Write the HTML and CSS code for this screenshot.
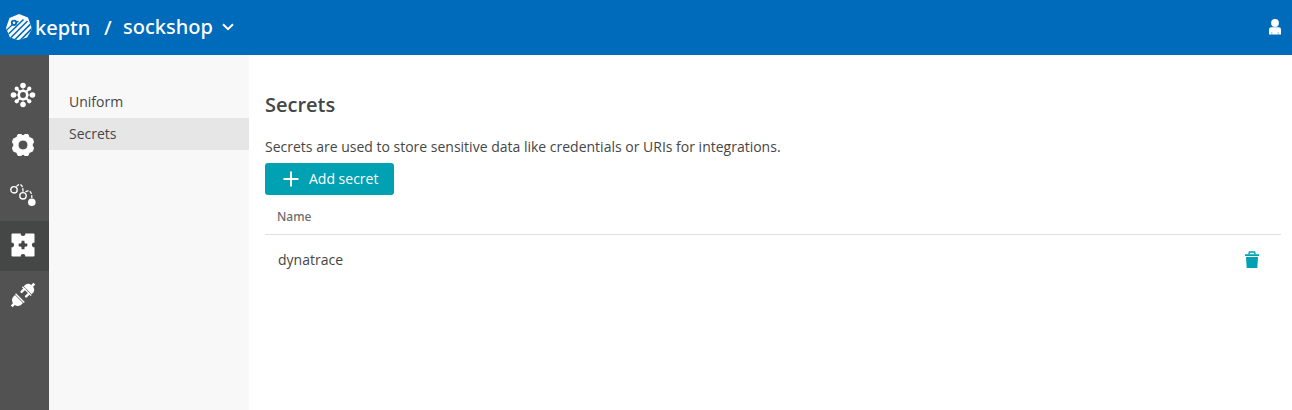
FILE: index.html
```html
<!DOCTYPE html>
<html lang="en">
<head>
<meta charset="utf-8">
<title>Secrets</title>
<link rel="stylesheet" href="styles.css">
</head>
<body>
<header class="topbar">
  <svg class="logo" viewBox="0 0 26 26">
    <defs><clipPath id="hept"><path d="M13 0 22 3.5 26 15 21 23.5 12 26 4 23.5 0 14 3.5 4Z"/></clipPath></defs>
    <g clip-path="url(#hept)">
      <rect width="26" height="26" fill="#fff"/>
      <path d="M1 21.5 17.5 5.5M4 24.5 21.5 7M8.5 26 26 8.5M13.5 27 27 13.5" stroke="#006bba" stroke-width="1.6"/>
      <path d="M0 16.8 6.5 10.5M9.5 8 12.5 7.5" stroke="#006bba" stroke-width="1.3"/>
      <circle cx="8" cy="8.8" r="2.2" fill="#fff" stroke="#006bba" stroke-width="1.9"/>
    </g>
  </svg>
  <span class="brand">keptn</span>
  <span class="slash">/</span>
  <span class="project">sockshop</span>
  <svg class="chevron" viewBox="0 0 12 8"><path d="M1 1.2 6 6.2 11 1.2"/></svg>
  <svg class="user" viewBox="0 0 12 16"><circle cx="6" cy="4" r="3.9"/><path d="M0 15.5V10.5Q0 8.3 2.2 8.3H9.8Q12 8.3 12 10.5V15.5Z"/><path d="M2.8 13V15.5M9.2 13V15.5" stroke="#006bba" stroke-width=".4"/></svg>
</header>
<div class="shell">
  <nav class="rail">
    <a class="rail-item"><svg viewBox="0 0 26 26">
      <circle cx="13" cy="13" r="4.2" fill="none" stroke="#fff" stroke-width="2.6"/>
      <path d="M13 3V8M13 18V23M3 13H8M18 13H23" stroke="#fff" stroke-width=".7"/>
      <path d="M7 7 10 10M16 16 19 19M7 19 10 16M16 10 19 7" stroke="#fff" stroke-width="2"/>
      <circle cx="13" cy="3.5" r="2.8"/><circle cx="13" cy="22.5" r="2.8"/><circle cx="3.5" cy="13" r="2.8"/><circle cx="22.5" cy="13" r="2.8"/>
      <circle cx="6.7" cy="6.7" r="2.1"/><circle cx="19.3" cy="6.7" r="2.1"/><circle cx="6.7" cy="19.3" r="2.1"/><circle cx="19.3" cy="19.3" r="2.1"/>
    </svg></a>
    <a class="rail-item"><svg viewBox="0 0 26 26">
      <path fill-rule="evenodd" stroke="#fff" stroke-linejoin="round" d="M8 2.5H11.2L13 4 14.8 2.5H18L19.2 5.5 22.5 6.8 23.5 10 22 13 23.5 16 22.5 19.2 19.2 20.5 18 23.5H14.8L13 22 11.2 23.5H8L6.8 20.5 3.5 19.2 2.5 16 4 13 2.5 10 3.5 6.8 6.8 5.5ZM18 13A5 5 0 1 0 8 13A5 5 0 1 0 18 13Z"/>
    </svg></a>
    <a class="rail-item"><svg viewBox="0 0 26 26">
      <g fill="none" stroke="#fff"><circle cx="4" cy="7.8" r="3.2" stroke-width="1.4"/><circle cx="13" cy="13.8" r="3.2" stroke-width="1.4"/>
      <path d="M6.5 4.5Q8 2.2 10.5 2.6Q13 3.5 13 10M15.5 10Q17.5 8.4 19.5 9Q22 10.5 21.8 16" stroke-width="1.3" stroke-dasharray="3.3 1.3"/></g>
      <circle cx="21.8" cy="20.2" r="3.8"/>
    </svg></a>
    <a class="rail-item active"><svg viewBox="0 0 26 26">
      <path fill-rule="evenodd" d="M2.5 1.5H10.8V3Q13 5.2 15.2 3V1.5H23.5Q24.5 1.5 24.5 2.5V10.8H23Q20.8 13 23 15.2H24.5V23.5Q24.5 24.5 23.5 24.5H15.2V23Q13 20.8 10.8 23V24.5H2.5Q1.5 24.5 1.5 23.5V15.2H3Q5.2 13 3 10.8H1.5V2.5Q1.5 1.5 2.5 1.5ZM11.5 8.7V10.8L10.8 11.5H8.7V14.5H10.8L11.5 15.2V17.3H14.5V15.2L15.2 14.5H17.3V11.5H15.2L14.5 10.8V8.7Z"/>
    </svg></a>
    <a class="rail-item"><svg viewBox="0 0 26 26">
      <g transform="translate(13 13) rotate(45)">
        <path d="M-6.2-4.7H6.2V-6H-6.2ZM-5.6-6.6H5.6V-9Q5-12.3 1.3-13V-16H-1.3V-13Q-5-12.3-5.6-9Z"/>
        <path d="M-3.2-5V-1.2M3.2-5V-1.2" stroke="#fff" stroke-width="2.4" stroke-linecap="round"/>
        <path d="M-6.2 3.7H6.2V5H-6.2ZM-5.6 5.7H5.6V8.5Q5 12 1.3 13V16H-1.3V13Q-5 12-5.6 8.5Z"/>
      </g>
    </svg></a>
  </nav>
  <aside class="submenu">
    <a class="submenu-item">Uniform</a>
    <a class="submenu-item selected">Secrets</a>
  </aside>
  <main class="content">
    <h1 class="title">Secrets</h1>
    <p class="description">Secrets are used to store sensitive data like credentials or URIs for integrations.</p>
    <button class="add"><svg viewBox="0 0 16 16"><path d="M8 .5V15.5M.5 8H15.5"/></svg><span>Add secret</span></button>
    <div class="table-head">Name</div>
    <div class="table-row"><span>dynatrace</span>
      <svg class="trash" viewBox="0 0 14 18"><path d="M0 3.3H14V5H0ZM1 6H13L12.3 17H1.7Z"/><path d="M3.9 3.5 4.4 1H9.6L10.1 3.5" fill="none" stroke="#00a1b2" stroke-width="1.4"/></svg>
    </div>
  </main>
</div>
</body>
</html>
```

FILE: styles.css
```css
* { box-sizing: border-box; }
body {
  margin: 0;
  height: 410px;
  display: flex;
  flex-direction: column;
  overflow: hidden;
  background: #fff;
  color: #454646;
  font: 14px/20px "Open Sans", "Noto Sans", sans-serif;
}
.topbar {
  height: 55px;
  flex: none;
  display: flex;
  align-items: center;
  padding: 0 11px 1px 6px;
  background: #006bba;
  color: #fff;
  font-family: "Noto Sans", "Open Sans", sans-serif;
  font-size: 20px;
  font-weight: 500;
}
.logo { width: 26px; height: 26px; }
.brand { width: 56px; margin-left: 3px; padding-top: 1px; }
.slash { width: 8px; margin-left: 13px; padding-top: 1px; }
.project { width: 91px; margin-left: 11px; }
.chevron { width: 12px; height: 8px; margin-left: 8px; fill: none; stroke: #fff; stroke-width: 2; }
.user { width: 12px; height: 16px; margin-left: auto; fill: #fff; }
.shell { flex: 1; display: flex; }
.rail { width: 49px; padding-top: 16px; background: #525252; }
.rail-item { height: 50px; display: flex; align-items: center; padding: 0 0 2px 10px; }
.rail-item svg { width: 26px; height: 26px; fill: #fff; }
.rail-item.active { background: #454646; }
.submenu { width: 200px; padding-top: 31px; background: #f8f8f8; }
.submenu-item { height: 32px; display: flex; align-items: center; padding-left: 20px; }
.submenu-item.selected { background: #e6e6e6; }
.content { flex: 1; padding: 36px 11px 0 16px; }
.title { margin: 0; font-size: 20px; line-height: 28px; font-weight: 600; }
.description { margin: 18px 0 6px; }
.add {
  width: 129px;
  height: 32px;
  display: flex;
  align-items: center;
  gap: 10px;
  padding: 0 0 0 18px;
  border: 0;
  border-radius: 3px;
  background: #00a1b2;
  color: #fff;
  font: inherit;
}
.add svg { width: 16px; height: 16px; stroke: #fff; stroke-width: 2; }
.table-head {
  height: 40px;
  padding: 12px 12px 0;
  border-bottom: 1px solid #e0e0e0;
  color: #6d6d6d;
  font-family: "Noto Sans", "Open Sans", sans-serif;
  font-size: 12px;
  font-weight: 500;
}
.table-row { height: 50px; display: flex; align-items: center; justify-content: space-between; padding: 0 22px 0 13px; }
.trash { width: 14px; height: 18px; fill: #00a1b2; }
```
